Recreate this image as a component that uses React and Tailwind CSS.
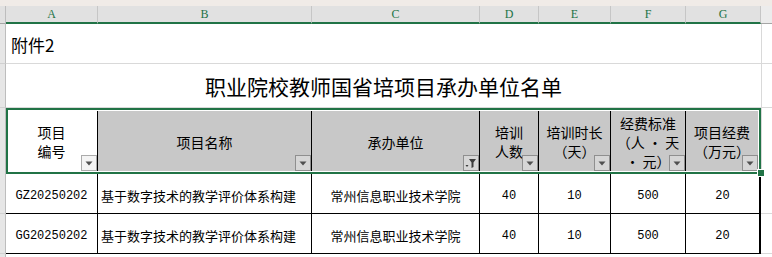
import React from "react";

const cjk = { fontFamily: '"Noto Sans CJK SC", "Noto Sans", sans-serif' };
const mono = { fontFamily: '"Liberation Mono", "Noto Sans CJK SC", monospace' };

const letters = ["A", "B", "C", "D", "E", "F", "G"];

const heads = [
  { lines: ["项目", "编号"], gray: false },
  { lines: ["项目名称"], gray: true },
  { lines: ["承办单位"], gray: true, filter: true },
  { lines: ["培训", "人数"], gray: true },
  { lines: ["培训时长", "（天）"], gray: true },
  { lines: ["经费标准", "（人 · 天", "· 元）"], gray: true },
  { lines: ["项目经费", "（万元）"], gray: true, last: true },
];

const rows = [
  ["GZ20250202", "基于数字技术的教学评价体系构建", "常州信息职业技术学院", "40", "10", "500", "20"],
  ["GG20250202", "基于数字技术的教学评价体系构建", "常州信息职业技术学院", "40", "10", "500", "20"],
];

const DropButton = ({ white, filter }) => (
  <div
    className={
      "absolute right-0 bottom-0 w-[16px] h-[16px] border flex items-center justify-center " +
      (white ? "bg-[#f4f4f4] border-[#ababab]" : "bg-[#d6d6d6] border-[#8f8f8f]")
    }
  >
    {filter ? (
      <svg width="12" height="12" viewBox="0 0 12 12">
        <path d="M4 2h7L8.5 5.5V10L6.5 11V5.5Z" fill="#3c3c3c" />
        <path d="M0.5 8h3L2 10Z" fill="#3c3c3c" />
      </svg>
    ) : (
      <svg width="8" height="5" viewBox="0 0 8 5">
        <path d="M0.5 0.5h7L4 4.5Z" fill="#505050" />
      </svg>
    )}
  </div>
);

export default function App() {
  return (
    <div className="w-[772px] h-[257px] overflow-hidden bg-white select-none">
      {/* ribbon edge */}
      <div className="h-[6px] bg-[#f0ebe7]" />

      {/* column letters */}
      <div className="grid grid-cols-[6px_92px_214px_168px_59px_72px_75px_75px_1fr] h-[18px]">
        <div className="bg-[#e1e1e1] border-r border-[#bdbdbd] border-b border-b-[#a6a6a6]" />
        {letters.map((l) => (
          <div
            key={l}
            className="bg-[#e1e1e1] border-r border-[#c6c6c6] border-b-2 border-b-[#217346] flex items-center justify-center text-[12px] text-[#217346] leading-none"
            style={{ fontFamily: '"Liberation Serif", serif' }}
          >
            {l}
          </div>
        ))}
        <div className="bg-[#ececec] border-b border-[#a6a6a6]" />
      </div>

      {/* 附件2 */}
      <div className="grid grid-cols-[6px_755px_1fr] h-[40px]">
        <div className="bg-[#e6e6e6] border-r border-[#bdbdbd] border-b border-b-[#d0d0d0]" />
        <div className="border-b border-[#d9d9d9] flex items-center pl-[5px] pt-[3px] text-[17px] text-black" style={cjk}>
          附件2
        </div>
        <div className="border-l border-b border-[#d9d9d9]" />
      </div>

      {/* title */}
      <div className="grid grid-cols-[6px_755px_1fr] h-[44px]">
        <div className="bg-[#e6e6e6] border-r border-[#bdbdbd] border-b border-b-[#d0d0d0]" />
        <div className="border-b border-[#d9d9d9] flex items-center justify-center pt-[2px] text-[21px] text-black" style={cjk}>
          职业院校教师国省培项目承办单位名单
        </div>
        <div className="border-l border-b border-[#d9d9d9]" />
      </div>

      {/* table header row with selection frame */}
      <div className="relative grid grid-cols-[6px_92px_214px_168px_59px_72px_75px_75px_1fr] h-[66px]">
        <div className="bg-[#e6e6e6] border-r border-[#bdbdbd]" />
        {heads.map((h, i) => (
          <div key={i} className={"py-[3px] " + (h.last ? "pr-[3px]" : "")}>
            <div
              className={
                "relative h-full flex flex-col items-center justify-center text-[14px] leading-[19px] text-black pt-[2px] " +
                (h.gray ? "bg-[#c8c8c8] " : "bg-white ") +
                (h.last ? "" : "border-r border-black")
              }
              style={cjk}
            >
              {h.lines.map((t) => (
                <span key={t} className="whitespace-nowrap">
                  {t}
                </span>
              ))}
              <DropButton white={!h.gray} filter={h.filter} />
            </div>
          </div>
        ))}
        <div className="border-l border-[#d9d9d9]" />
        {/* selection frame and fill handle */}
        <div className="absolute left-[6px] top-0 w-[755px] h-[66px] border-2 border-[#217346] pointer-events-none" />
        <div className="absolute left-[758px] top-[62px] w-[6px] h-[6px] bg-[#217346] outline outline-1 outline-white" />
      </div>

      {/* data rows */}
      {rows.map((r, ri) => (
        <div key={ri} className="grid grid-cols-[6px_92px_214px_168px_59px_72px_75px_75px_1fr] h-[40px]">
          <div className="bg-[#e6e6e6] border-r border-[#bdbdbd] border-b border-b-[#d0d0d0]" />
          {r.map((c, ci) => (
            <div
              key={ci}
              className={
                "border-b border-black flex items-center text-[13px] text-black pt-[4px] " +
                (ci === 6 ? "border-r-2 border-r-black " : "border-r border-r-black ") +
                (ci === 1 ? "justify-start pl-[3px]" : "justify-center")
              }
              style={ci === 1 || ci === 2 ? cjk : mono}
            >
              {ci === 0 || ci > 2 ? <span className="text-[12px]">{c}</span> : c}
            </div>
          ))}
          <div className="border-b border-[#d9d9d9]" />
        </div>
      ))}

      <div className="grid grid-cols-[6px_1fr] h-[10px]">
        <div className="bg-[#e6e6e6] border-r border-[#bdbdbd]" />
        <div />
      </div>
    </div>
  );
}
